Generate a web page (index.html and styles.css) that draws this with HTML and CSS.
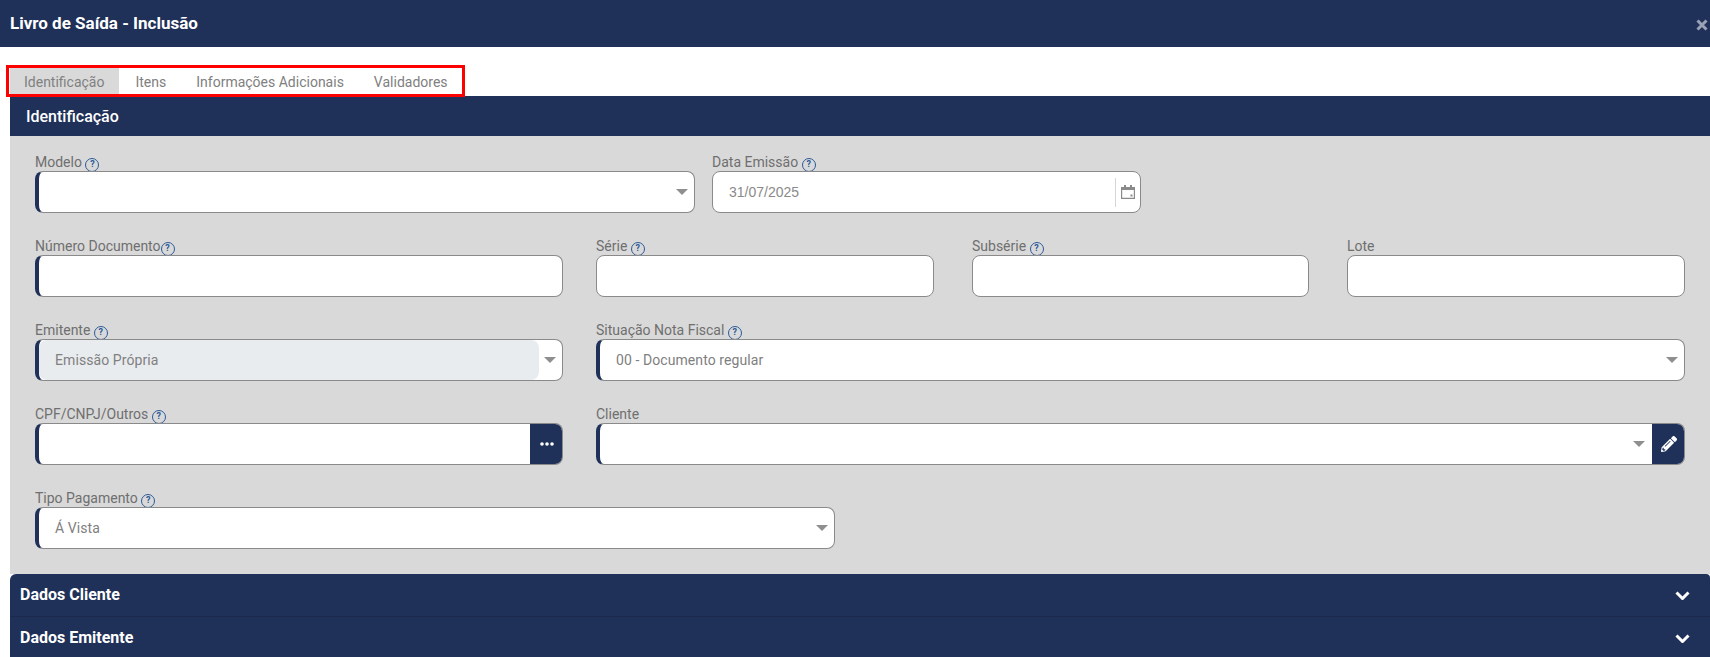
FILE: index.html
```html
<!DOCTYPE html>
<html lang="pt-BR">
<head>
<meta charset="utf-8">
<title>Livro de Saída - Inclusão</title>
<link rel="stylesheet" href="styles.css">
</head>
<body>
<header class="topbar">
  <h1 class="title">Livro de Saída - Inclusão</h1>
  <svg class="close" viewBox="0 0 12 12"><path d="M1.5 1.5l9 9M10.5 1.5l-9 9"/></svg>
</header>
<div class="main">
  <nav class="tabs">
    <span class="tab active">Identificação</span>
    <span class="tab">Itens</span>
    <span class="tab">Informações Adicionais</span>
    <span class="tab">Validadores</span>
  </nav>
  <section class="panel-head">Identificação</section>
  <section class="form">
    <div class="row">
      <div class="field w-modelo">
        <label class="label">Modelo <span class="help">?</span></label>
        <div class="box req"><svg class="caret" viewBox="0 0 12 6"><path d="M0 0h12L6 6z"/></svg></div>
      </div>
      <div class="field w-data">
        <label class="label">Data Emissão <span class="help">?</span></label>
        <div class="box"><span class="value date">31/07/2025</span>
          <span class="cal-sep"></span>
          <svg class="cal" viewBox="0 0 14 14"><path d="M.6 2.6h12.8v10.8H.6z" fill="none" stroke="#8a8a8a" stroke-width="1.2"/><path d="M1 2h2V0h2v2h4V0h2v2h2v3H1z" fill="#8a8a8a"/><rect x="9.5" y="9.5" width="2" height="2" fill="#8a8a8a"/></svg>
        </div>
      </div>
    </div>
    <div class="row">
      <div class="field w-num">
        <label class="label">Número Documento<span class="help">?</span></label>
        <div class="box req"></div>
      </div>
      <div class="field w-serie">
        <label class="label">Série <span class="help">?</span></label>
        <div class="box"></div>
      </div>
      <div class="field w-sub">
        <label class="label">Subsérie <span class="help">?</span></label>
        <div class="box"></div>
      </div>
      <div class="field w-lote">
        <label class="label">Lote</label>
        <div class="box"></div>
      </div>
    </div>
    <div class="row">
      <div class="field w-num">
        <label class="label">Emitente <span class="help">?</span></label>
        <div class="box req">
          <span class="disabled">Emissão Própria</span>
          <svg class="caret" viewBox="0 0 12 6"><path d="M0 0h12L6 6z"/></svg>
        </div>
      </div>
      <div class="field w-wide">
        <label class="label">Situação Nota Fiscal <span class="help">?</span></label>
        <div class="box req"><span class="value">00 - Documento regular</span><svg class="caret" viewBox="0 0 12 6"><path d="M0 0h12L6 6z"/></svg></div>
      </div>
    </div>
    <div class="row">
      <div class="field w-num">
        <label class="label">CPF/CNPJ/Outros <span class="help">?</span></label>
        <div class="box req">
          <button class="addon"><svg class="dots" viewBox="0 0 14 4"><circle cx="2" cy="2" r="1.8"/><circle cx="7" cy="2" r="1.8"/><circle cx="12" cy="2" r="1.8"/></svg></button>
        </div>
      </div>
      <div class="field w-wide">
        <label class="label">Cliente</label>
        <div class="box req">
          <svg class="caret with-addon" viewBox="0 0 12 6"><path d="M0 0h12L6 6z"/></svg>
          <button class="addon"><svg class="pencil" viewBox="0 0 512 512"><path d="M497.9 142.1l-46.1 46.1c-4.7 4.7-12.3 4.7-17 0l-111-111c-4.7-4.7-4.7-12.3 0-17l46.1-46.1c18.7-18.7 49.1-18.7 67.9 0l60.1 60.1c18.8 18.7 18.8 49.1 0 67.9zM284.2 99.8L21.6 362.4.4 483.9c-2.9 16.4 11.4 30.6 27.8 27.8l121.5-21.3 262.6-262.6c4.7-4.7 4.7-12.3 0-17l-111-111c-4.8-4.7-12.4-4.7-17.1 0zM124.1 339.9c-5.5-5.5-5.5-14.3 0-19.8l154-154c5.5-5.5 14.3-5.5 19.8 0s5.5 14.3 0 19.8l-154 154c-5.5 5.5-14.3 5.5-19.8 0zM88 424h48v36.3l-64.5 11.3-31.1-31.1L51.7 376H88v48z"/></svg></button>
        </div>
      </div>
    </div>
    <div class="row">
      <div class="field w-tipo">
        <label class="label">Tipo Pagamento <span class="help">?</span></label>
        <div class="box req"><span class="value">Á Vista</span><svg class="caret" viewBox="0 0 12 6"><path d="M0 0h12L6 6z"/></svg></div>
      </div>
    </div>
  </section>
  <section class="accordion">
    <div class="acc-item">Dados Cliente<svg class="chev" viewBox="0 0 15 9"><path d="M1.5 1.5l6 6 6-6"/></svg></div>
    <div class="acc-item">Dados Emitente<svg class="chev" viewBox="0 0 15 9"><path d="M1.5 1.5l6 6 6-6"/></svg></div>
  </section>
</div>
</body>
</html>
```
FILE: styles.css
```css
* { box-sizing: border-box; }
html, body { margin: 0; height: 657px; overflow: hidden; background: #fff; }
body { font-family: Roboto, "Liberation Sans", sans-serif; font-size: 14px; color: #757575; }

.topbar { height: 47px; background: #1f3158; display: flex; align-items: center; justify-content: space-between; padding: 0 2px 1px 10px; margin-bottom: 18px; }
.title { margin: 0; font-size: 17px; font-weight: 700; color: #fff; }
.close { width: 12px; height: 12px; margin-top: 3px; }
.close path { stroke: #9aa3b5; stroke-width: 3; fill: none; }

.main { padding-left: 10px; }
.tabs { display: flex; width: fit-content; margin-left: -4px; height: 32px; border: 3px solid #f00; padding-left: 1px; position: relative; z-index: 1; margin-bottom: -1px; background: #fff; }
.tab { padding: 0 15px; line-height: 28px; color: #808080; font-size: 14px; }
.tab:first-child { padding: 0 15px 0 14px; }
.tab:nth-child(2) { margin-left: 1px; }
.tab:last-child { padding-right: 14px; }
.tab.active { background: #d9d9d9; }

.panel-head { height: 40px; background: #1f3158; color: #fff; font-size: 16px; font-weight: 500; line-height: 41px; padding-left: 16px; }
.form { background: #d9d9d9; padding: 14px 25px 0; height: 438px; }
.row { display: flex; height: 84px; }
.field { display: flex; flex-direction: column; flex: none; }
.w-modelo { width: 660px; margin-right: 17px; }
.w-data { width: 429px; }
.w-num { width: 528px; margin-right: 33px; }
.w-serie { width: 338px; margin-right: 38px; }
.w-sub { width: 337px; margin-right: 38px; }
.w-lote { width: 338px; }
.w-wide { width: 1089px; }
.w-tipo { width: 800px; }

.label { height: 21px; line-height: 24px; color: #6f6f6f; font-size: 14px; white-space: nowrap; }
.help { display: inline-block; width: 14px; height: 14px; border: 1.5px solid #2a5a9a; border-radius: 50%; color: #2a5a9a; font-size: 9px; font-weight: 700; line-height: 11px; text-align: center; vertical-align: 0; }

.box { position: relative; height: 42px; background: #fff; border: 1px solid #8a8a8a; border-radius: 8px; display: flex; align-items: center; overflow: hidden; }
.box.req { border-left: 4px solid #1f3158; }
.value { color: #808080; font-size: 14px; letter-spacing: .08px; padding-left: 16px; }
.value.date { font-family: "Liberation Sans", Arial, sans-serif; letter-spacing: 0; color: #8a8a8a; }
.caret { position: absolute; right: 6px; top: 17px; width: 12px; height: 6px; }
.caret.with-addon { right: 39px; }
.caret path { fill: #8f8f8f; }
.disabled { background: #e9ecef; color: #808080; letter-spacing: .08px; height: 100%; width: 500px; padding-left: 16px; display: flex; align-items: center; border-radius: 8px; }
.cal-sep { position: absolute; right: 24px; top: 6px; height: 29px; width: 1px; background: #d5d5d5; }
.cal { position: absolute; right: 5px; top: 13px; width: 14px; height: 14px; }
.addon { position: absolute; right: -1px; top: -1px; bottom: -1px; width: 33px; border: 0; padding: 0; background: #1f3158; display: flex; align-items: center; justify-content: center; }
.dots { width: 14px; height: 4px; fill: #fff; }
.pencil { width: 16px; height: 16px; fill: #fff; }

.accordion { background: #1f3158; border-top-left-radius: 6px; border-top-right-radius: 4px; }
.acc-item { height: 43px; display: flex; align-items: center; justify-content: space-between; padding: 0 20px 2px 10px; color: #fff; font-size: 16px; font-weight: 700; }
.acc-item:first-child { border-bottom: 1px solid #1b2a4a; }
.chev { width: 15px; height: 9px; margin-top: 2px; }
.chev path { fill: none; stroke: #fff; stroke-width: 3; }
```
